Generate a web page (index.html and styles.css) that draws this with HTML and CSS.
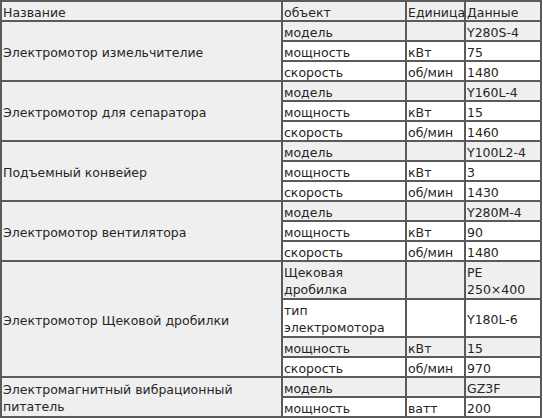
FILE: index.html
```html
<!DOCTYPE html>
<html lang="ru">
<head>
<meta charset="utf-8">
<title>Таблица</title>
<link rel="stylesheet" href="styles.css">
</head>
<body>
<table class="spec">
  <colgroup>
    <col class="c-name">
    <col class="c-obj">
    <col class="c-unit">
    <col class="c-data">
  </colgroup>
  <tr class="g">
    <td>Название</td><td>объект</td><td>Единица</td><td>Данные</td>
  </tr>
  <tr class="g">
    <td rowspan="3" class="name">Электромотор измельчителие</td><td>модель</td><td></td><td>Y280S-4</td>
  </tr>
  <tr class="w"><td>мощность</td><td>кВт</td><td>75</td></tr>
  <tr class="w"><td>скорость</td><td>об/мин</td><td>1480</td></tr>
  <tr class="g">
    <td rowspan="3" class="name">Электромотор для сепаратора</td><td>модель</td><td></td><td>Y160L-4</td>
  </tr>
  <tr class="w"><td>мощность</td><td>кВт</td><td>15</td></tr>
  <tr class="w"><td>скорость</td><td>об/мин</td><td>1460</td></tr>
  <tr class="g">
    <td rowspan="3" class="name">Подъемный конвейер</td><td>модель</td><td></td><td>Y100L2-4</td>
  </tr>
  <tr class="w"><td>мощность</td><td>кВт</td><td>3</td></tr>
  <tr class="w"><td>скорость</td><td>об/мин</td><td>1430</td></tr>
  <tr class="g">
    <td rowspan="3" class="name">Электромотор вентилятора</td><td>модель</td><td></td><td>Y280M-4</td>
  </tr>
  <tr class="w"><td>мощность</td><td>кВт</td><td>90</td></tr>
  <tr class="w"><td>скорость</td><td>об/мин</td><td>1480</td></tr>
  <tr class="g">
    <td rowspan="4" class="name">Электромотор Щековой дробилки</td><td class="two">Щековая дробилка</td><td></td><td class="two">PE 250×400</td>
  </tr>
  <tr class="w"><td class="two">тип электромотора</td><td></td><td>Y180L-6</td></tr>
  <tr class="g"><td>мощность</td><td>кВт</td><td>15</td></tr>
  <tr class="w"><td>скорость</td><td>об/мин</td><td>970</td></tr>
  <tr class="g">
    <td rowspan="2" class="name two">Электромагнитный вибрационный питатель</td><td>модель</td><td></td><td>GZ3F</td>
  </tr>
  <tr class="w"><td>мощность</td><td>ватт</td><td>200</td></tr>
</table>
</body>
</html>
```

FILE: styles.css
```css
html, body {
  margin: 0;
  padding: 0;
  background: #ffffff;
}

.spec {
  table-layout: fixed;
  width: 542px;
  border: 1px solid #5a5a5a;
  border-spacing: 0;
  font-family: "DejaVu Sans", Verdana, sans-serif;
  font-size: 12.5px;
  color: #262626;
}

.c-name { width: 281px; }
.c-obj { width: 124px; }
.c-unit { width: 59px; }
.c-data { width: 76px; }

.spec td {
  border: 1px solid #5a5a5a;
  padding: 4px 1px 0;
  line-height: 14px;
  vertical-align: middle;
  text-align: left;
}

.spec td.two {
  padding-top: 2px;
  line-height: 17px;
}

.spec tr.g td {
  background: #efefef;
}

.spec tr.w td {
  background: #ffffff;
}

.spec td.name {
  background: #efefef !important;
}
```
